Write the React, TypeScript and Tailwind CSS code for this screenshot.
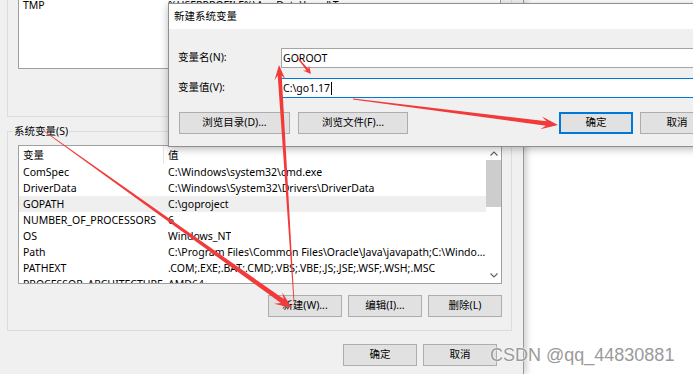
import React from "react";

function arrowPts(
  x1: number, y1: number, x2: number, y2: number,
  w0: number, w1: number, hl: number, hw: number
): string {
  const dx = x2 - x1, dy = y2 - y1;
  const len = Math.hypot(dx, dy);
  const ux = dx / len, uy = dy / len;
  const nx = -uy, ny = ux;
  const bx = x2 - ux * hl, by = y2 - uy * hl;
  const kx = x2 - ux * hl * 0.7, ky = y2 - uy * hl * 0.7;
  const p = [
    [x1 + (nx * w0) / 2, y1 + (ny * w0) / 2],
    [kx + (nx * w1) / 2, ky + (ny * w1) / 2],
    [bx + (nx * hw) / 2, by + (ny * hw) / 2],
    [x2, y2],
    [bx - (nx * hw) / 2, by - (ny * hw) / 2],
    [kx - (nx * w1) / 2, ky - (ny * w1) / 2],
    [x1 - (nx * w0) / 2, y1 - (ny * w0) / 2],
  ];
  return p.map((q) => q.map((v) => v.toFixed(1)).join(",")).join(" ");
}

const sysRows: { name: string; value: string; sel?: boolean }[] = [
  { name: "ComSpec", value: "C:\\Windows\\system32\\cmd.exe" },
  { name: "DriverData", value: "C:\\Windows\\System32\\Drivers\\DriverData" },
  { name: "GOPATH", value: "C:\\goproject", sel: true },
  { name: "NUMBER_OF_PROCESSORS", value: "6" },
  { name: "OS", value: "Windows_NT" },
  { name: "Path", value: "C:\\Program Files\\Common Files\\Oracle\\Java\\javapath;C:\\Windo..." },
  { name: "PATHEXT", value: ".COM;.EXE;.BAT;.CMD;.VBS;.VBE;.JS;.JSE;.WSF;.WSH;.MSC" },
  { name: "PROCESSOR_ARCHITECTURE", value: "AMD64" },
];

function WinButton({ children, w, primary }: { children: React.ReactNode; w: string; primary?: boolean }) {
  return (
    <div
      className={
        "h-[22px] flex items-center justify-center bg-[#e1e1e1] text-black " +
        (primary ? "border-2 border-[#0078d7] " : "border border-[#adadad] ") +
        w
      }
    >
      {children}
    </div>
  );
}

export default function App() {
  return (
    <div className="relative w-[693px] h-[374px] overflow-hidden bg-white text-[10.5px] text-black font-['Noto_Sans','Noto_Sans_CJK_SC',sans-serif]">
      {/* background window: 环境变量 */}
      <div className="absolute left-0 top-0 w-[524px] h-[374px] bg-[#f0f0f0] border-r border-[#9a9a9a] shadow-[3px_0_6px_rgba(0,0,0,0.18)] flex flex-col pl-[7px] pr-[11px]">
        {/* user variables group (mostly scrolled off) */}
        <div className="-mt-[20px] h-[137px] border border-[#dcdcdc] px-[10px] pt-[15px]">
          <div className="h-[73px] border border-[#a0a0a0] bg-white">
            <div className="flex h-[16px] leading-[16px] whitespace-nowrap">
              <div className="w-[149px] pl-[4px]">TMP</div>
              <div>%USERPROFILE%\AppData\Local\Temp</div>
            </div>
          </div>
        </div>

        {/* system variables group */}
        <fieldset className="mt-[6px] border border-[#dcdcdc] pl-[10px] pr-[9px] pb-[13px]">
          <legend className="ml-[-5px] px-[1px] leading-[16px]">系统变量(S)</legend>
          <div className="mt-[6px] h-[139px] border border-[#a0a0a0] bg-white flex overflow-hidden">
            <div className="flex-1 min-w-0 flex flex-col">
              <div className="flex h-[18px] leading-[18px] whitespace-nowrap">
                <div className="w-[145px] pl-[4px] border-r border-[#e5e5e5]">变量</div>
                <div className="pl-[4px]">值</div>
              </div>
              {sysRows.map((r) => (
                <div
                  key={r.name}
                  className={
                    "flex shrink-0 h-[16px] leading-[16px] whitespace-nowrap " +
                    (r.sel ? "bg-[#efefef]" : "")
                  }
                >
                  <div className="w-[145px] shrink-0 pl-[4px]">{r.name}</div>
                  <div className="pl-[4px] min-w-0 truncate">{r.value}</div>
                </div>
              ))}
            </div>
            <div className="w-[15px] shrink-0 flex flex-col bg-white">
              <div className="h-[14px] flex items-center justify-center">
                <svg width="8" height="5" viewBox="0 0 8 5">
                  <path d="M0.5 4.5 L4 1 L7.5 4.5" fill="none" stroke="#606060" strokeWidth="1.1" />
                </svg>
              </div>
              <div className="h-[47px] bg-[#cdcdcd]" />
              <div className="flex-1" />
              <div className="h-[16px] flex items-center justify-center">
                <svg width="8" height="5" viewBox="0 0 8 5">
                  <path d="M0.5 0.5 L4 4 L7.5 0.5" fill="none" stroke="#606060" strokeWidth="1.1" />
                </svg>
              </div>
            </div>
          </div>
          <div className="mt-[11px] flex justify-end gap-[6px]">
            <WinButton w="w-[74px]">新建(W)...</WinButton>
            <WinButton w="w-[74px]">编辑(I)...</WinButton>
            <WinButton w="w-[74px]">删除(L)</WinButton>
          </div>
        </fieldset>

        <div className="mt-[13px] flex justify-end gap-[6px] pr-[15px]">
          <WinButton w="w-[74px]">确定</WinButton>
          <WinButton w="w-[74px]">取消</WinButton>
        </div>
      </div>

      {/* front dialog: 新建系统变量 */}
      <div className="absolute left-[168px] top-[3px] w-[558px] h-[144px] border border-[#8f8f8f] shadow-[0_2px_8px_rgba(0,0,0,0.28)] flex flex-col bg-[#f0f0f0]">
        <div className="h-[25px] shrink-0 bg-white flex items-center pl-[5px]">新建系统变量</div>
        <div className="flex-1 flex flex-col pt-[19px] pl-[9px] pr-[11px]">
          <div className="flex items-center h-[20px]">
            <div className="w-[103px] shrink-0">变量名(N):</div>
            <div className="flex-1 h-[20px] border border-[#a5a5a5] bg-white flex items-center pl-[1px] leading-[18px]">
              GOROOT
            </div>
          </div>
          <div className="flex items-center h-[20px] mt-[10px]">
            <div className="w-[103px] shrink-0">变量值(V):</div>
            <div className="flex-1 h-[20px] border border-[#0078d7] bg-white flex items-center pl-[1px] leading-[18px]">
              <span>C:\go1.17</span>
              <span className="w-px h-[13px] bg-black ml-[1px]" />
            </div>
          </div>
          <div className="flex items-center mt-[14px] ml-[1px]">
            <WinButton w="w-[111px]">浏览目录(D)...</WinButton>
            <div className="ml-[8px]">
              <WinButton w="w-[110px]">浏览文件(F)...</WinButton>
            </div>
            <div className="flex-1" />
            <WinButton w="w-[74px]" primary>确定</WinButton>
            <div className="ml-[7px]">
              <WinButton w="w-[74px]">取消</WinButton>
            </div>
          </div>
        </div>
      </div>

      {/* red annotation arrows */}
      <svg className="absolute left-0 top-0 pointer-events-none" width="693" height="374" viewBox="0 0 693 374">
        <g fill="#f23a3a">
          <polygon points={arrowPts(44, 131, 292, 308, 0.8, 5, 17, 14)} />
          <polygon points={arrowPts(294, 302, 279, 65, 0.8, 4, 15, 11)} />
          <polygon points={arrowPts(297, 57, 311, 74, 1, 2.2, 8, 8)} />
          <polygon points={arrowPts(353, 99, 558, 125, 0.8, 4.5, 17, 13)} />
        </g>
      </svg>

      {/* watermark */}
      <div className="absolute left-[490px] top-[345px] leading-[20px] text-[18px] text-[#9a9a9a] whitespace-nowrap font-['Liberation_Sans',Arial,sans-serif] [text-shadow:0_0_2px_#ffffff,0_0_1px_#ffffff]">
        CSDN @qq_44830881
      </div>
    </div>
  );
}
